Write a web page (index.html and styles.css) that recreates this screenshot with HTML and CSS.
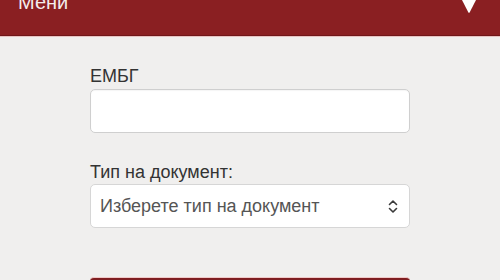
FILE: index.html
```html
<!DOCTYPE html>
<html lang="bg">
<head>
<meta charset="utf-8">
<title>ЕМБГ</title>
<link rel="stylesheet" href="styles.css">
</head>
<body>
<header class="topbar">
  <span class="menu-title">Мени</span>
  <svg class="menu-caret" width="14" height="13" viewBox="0 0 14 13" aria-hidden="true">
    <path d="M0 0 H14 L7.6 12.5 Q7 13 6.4 12.5 Z" fill="#ffffff"/>
  </svg>
</header>
<main class="form">
  <label class="field-label field-label--first" for="egn">ЕМБГ</label>
  <input class="text-input" id="egn" type="text">
  <label class="field-label field-label--second" for="doc">Тип на документ:</label>
  <div class="select-box" id="doc">
    <span class="select-text">Изберете тип на документ</span>
    <svg class="select-icon" width="10" height="15" viewBox="0 0 10 15" aria-hidden="true">
      <path d="M1.5 5.5 L5 2 L8.5 5.5 M1.5 9.5 L5 13 L8.5 9.5" fill="none" stroke="#3a3a3a" stroke-width="1.6" stroke-linecap="round" stroke-linejoin="round"/>
    </svg>
  </div>
  <div class="submit-btn"></div>
</main>
</body>
</html>
```
FILE: styles.css
```css
html, body {
  margin: 0;
  padding: 0;
  background: #f0efee;
  font-family: "Liberation Sans", Arial, sans-serif;
  overflow: hidden;
}

.topbar {
  margin-top: -20px;
  height: 56px;
  padding: 12px 24px 0 18px;
  box-sizing: border-box;
  background: #8a1f22;
  border-bottom: 1px solid #6f1619;
  box-shadow: 0 1px 0 #e8c3c2;
  display: flex;
  justify-content: space-between;
  align-items: flex-start;
}

.menu-title {
  color: #f4ecec;
  font-size: 20px;
  line-height: 20px;
}

.menu-caret {
  margin-top: 8px;
  display: block;
}

.form {
  width: 320px;
  margin: 0 auto;
  padding-top: 28px;
  display: flex;
  flex-direction: column;
}

.field-label {
  display: block;
  color: #333333;
  font-size: 18px;
  line-height: 24px;
}

.field-label--first {
  margin-bottom: 1px;
}

.field-label--second {
  margin-top: 27px;
}

.text-input {
  box-sizing: border-box;
  width: 320px;
  height: 44px;
  margin: 0;
  border: 1px solid #cfcfcf;
  border-radius: 5px;
  background: #ffffff;
  box-shadow: inset 0 1px 1px rgba(0, 0, 0, 0.04);
  outline: none;
}

.select-box {
  box-sizing: border-box;
  height: 44px;
  border: 1px solid #d6d6d6;
  border-radius: 5px;
  background: #ffffff;
  display: flex;
  align-items: center;
  justify-content: space-between;
  padding: 0 11px 0 9px;
}

.select-text {
  color: #555555;
  font-size: 18px;
  line-height: 20px;
}

.select-icon {
  display: block;
}

.submit-btn {
  margin-top: 49px;
  height: 40px;
  border-top: 1px solid #f0c9c8;
  background: #7e1d20;
  border-radius: 4px 4px 0 0;
}
```
